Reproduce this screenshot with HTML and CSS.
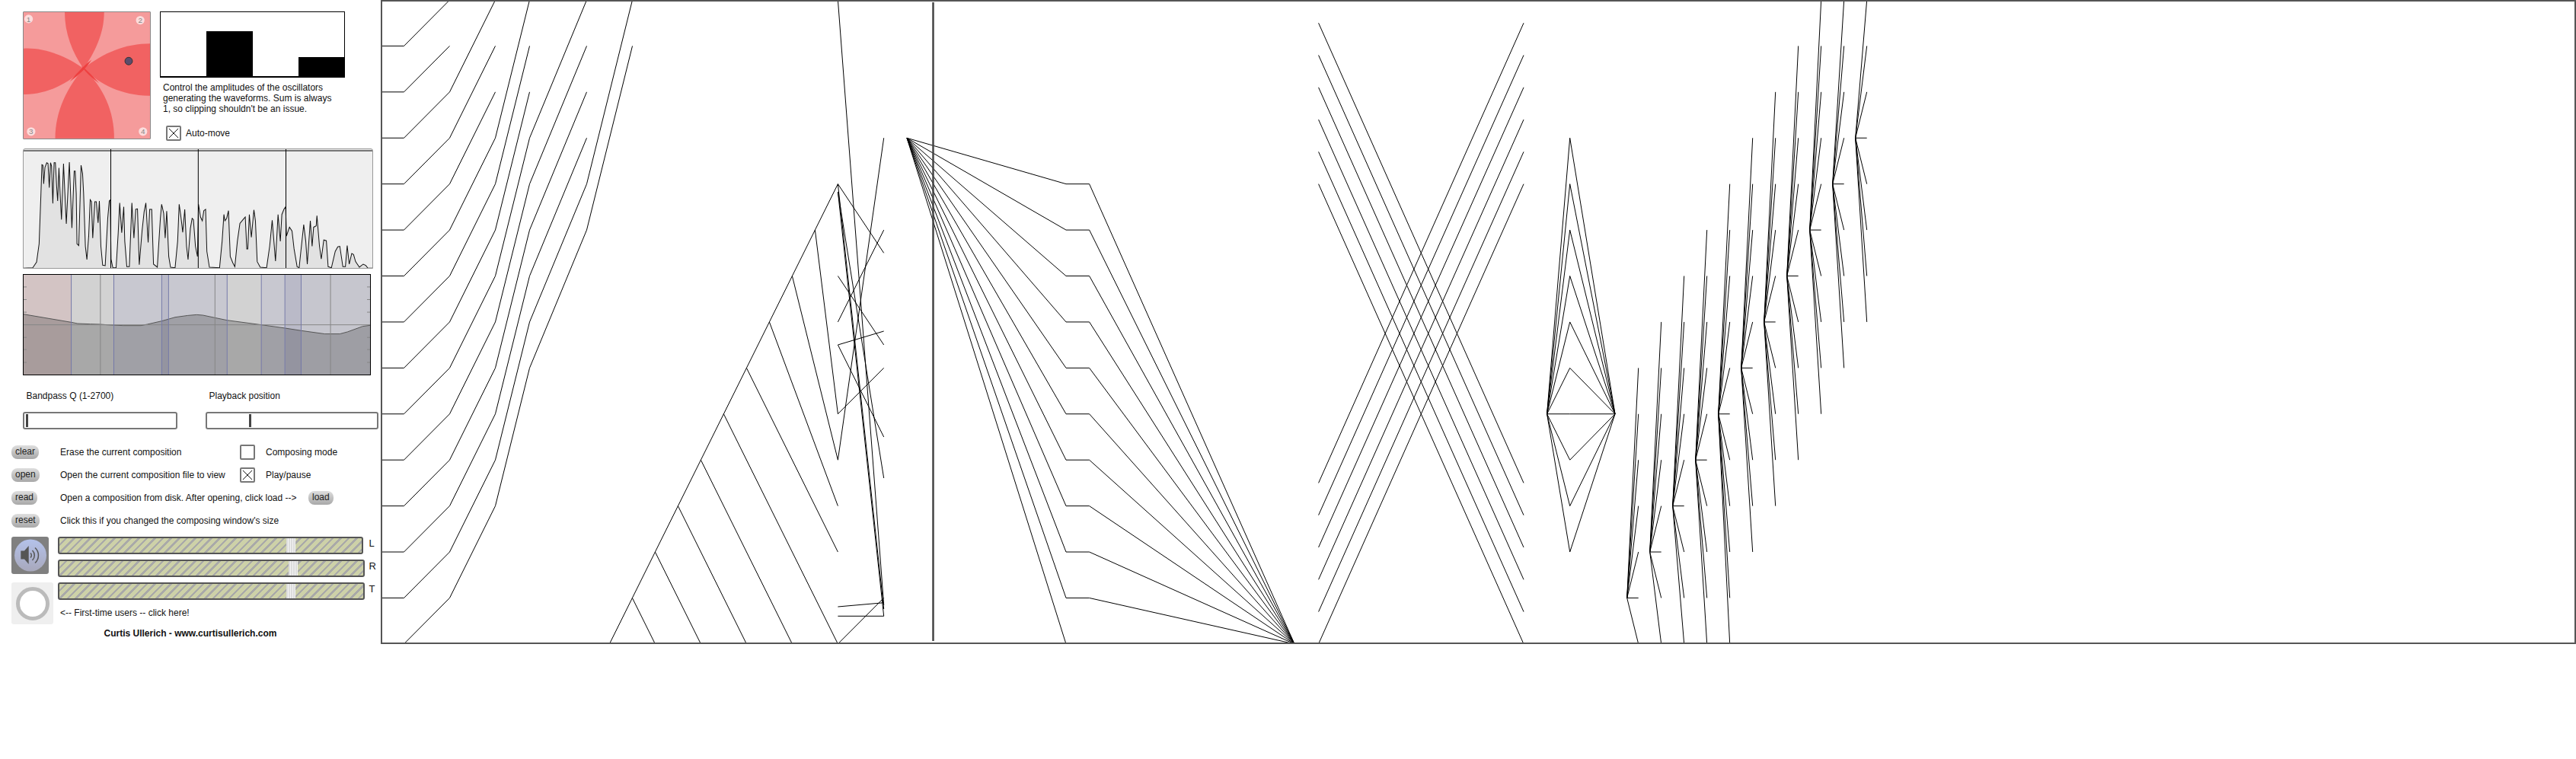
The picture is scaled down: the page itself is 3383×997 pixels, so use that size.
FILE: index.html

```html
<!DOCTYPE html>
<html lang="en">
<head>
    <meta charset="UTF-8">
    <title>Wave Composer</title>
    <link rel="stylesheet" href="styles.css">
</head>
<body>
    <div class="panel">
        <div class="osc">
            <svg class="pad" viewBox="91 45 504 504" preserveAspectRatio="none">
                <rect x="91" y="45" width="504" height="504" fill="#f59b9b"/>
                <g fill="#f16262">
                    <path d="M255,45 C255,130 285,205 330,270 C375,205 412,130 412,45 Z"/>
                    <path d="M91,190 C170,185 260,220 330,270 C270,330 180,375 91,373 Z"/>
                    <path d="M595,170 C500,170 410,205 330,270 C395,335 490,380 595,378 Z"/>
                    <path d="M217,548 C217,440 265,345 330,270 C410,345 452,440 452,548 Z"/>
                </g>
                <g fill="#ee4040">
                    <path d="M275,322 Q325,262 362,235 Q335,280 275,322 Z"/>
                    <path d="M320,258 Q345,275 392,328 Q345,295 320,258 Z"/>
                </g>
                <g fill="#fff" fill-opacity="0.65">
                    <circle cx="111" cy="72" r="17"/>
                    <circle cx="556" cy="77" r="17"/>
                    <circle cx="121" cy="521" r="17"/>
                    <circle cx="567" cy="521" r="17"/>
                </g>
                <g class="pad-num" text-anchor="middle">
                    <text x="111" y="83">1</text>
                    <text x="556" y="88">2</text>
                    <text x="121" y="532">3</text>
                    <text x="567" y="532">4</text>
                </g>
                <circle cx="510" cy="240" r="15" fill="#5c4c6c" stroke="#333" stroke-width="3"/>
            </svg>
            <div class="osc-side">
                <div class="bars">
                    <div class="bar"></div>
                    <div class="bar" style="height: 59px"></div>
                    <div class="bar"></div>
                    <div class="bar" style="height: 25px"></div>
                </div>
                <p class="osc-text">Control the amplitudes of the oscillators generating the waveforms. Sum is always 1, so clipping shouldn't be an issue.</p>
                <div class="auto-move">
                    <span class="check"><svg viewBox="0 0 16 16"><path d="M1,1 L15,15 M15,1 L1,15"/></svg></span>
                    <span>Auto-move</span>
                </div>
            </div>
        </div>

        <svg class="scope" viewBox="94 19 1372 466" preserveAspectRatio="none">
            <polyline fill="#e2e2e2" stroke="#111" stroke-width="3" points="90,486 130,484 145,462 155,390 162,200 166,80 170,82 173,155 178,90 185,72 190,75 195,170 200,72 204,85 209,232 214,72 219,72 224,165 228,222 233,92 238,200 243,295 251,76 262,312 274,70 284,328 293,105 297,105 301,192 304,390 311,397 320,82 326,115 330,190 337,400 343,452 350,360 356,217 361,225 366,368 374,225 380,225 387,308 392,222 398,400 405,474 415,476 425,290 431,222 435,218 438,450 445,484 458,484 466,350 472,230 480,347 488,245 492,380 500,480 510,480 520,230 528,368 535,255 542,253 549,472 560,340 568,265 575,230 584,385 590,255 598,255 605,470 620,482 632,290 637,235 645,270 651,368 657,262 665,440 672,482 690,484 700,380 706,235 713,285 720,345 728,255 735,400 741,452 750,330 757,290 762,295 770,400 778,440 782,235 790,285 797,300 803,260 810,255 815,420 825,482 865,484 875,380 882,275 886,300 893,290 900,260 907,440 917,465 925,480 935,380 945,310 960,292 966,285 972,410 976,410 982,275 990,365 1000,257 1006,300 1013,460 1025,482 1050,484 1062,400 1072,298 1085,458 1095,275 1104,380 1110,275 1118,255 1125,245 1128,360 1140,325 1150,340 1158,410 1170,480 1178,484 1190,370 1196,315 1204,380 1210,470 1222,300 1229,400 1235,325 1245,320 1248,280 1258,400 1265,450 1275,375 1285,378 1292,480 1305,484 1320,420 1330,402 1338,400 1350,480 1360,480 1367,397 1375,470 1385,428 1392,432 1400,460 1415,482 1430,470 1440,475 1448,485 1469,486"/>
            <path d="M94,25 H1466 M437,19 V485 M781,19 V485 M1126,19 V485" fill="none" stroke="#000" stroke-width="3"/>
        </svg>

        <svg class="spectrum" viewBox="92 512 1367 395" preserveAspectRatio="none">
            <g>
                <rect x="92" y="512" width="188" height="395" fill="#d3c4c4"/>
                <rect x="280" y="512" width="168" height="395" fill="#d2d2d2"/>
                <rect x="448" y="512" width="189" height="395" fill="#c8c8d0"/>
                <rect x="637" y="512" width="27" height="395" fill="#babac8"/>
                <rect x="664" y="512" width="231" height="395" fill="#c8c8d0"/>
                <rect x="895" y="512" width="135" height="395" fill="#d2d2d2"/>
                <rect x="1030" y="512" width="93" height="395" fill="#c8c8d0"/>
                <rect x="1123" y="512" width="64" height="395" fill="#babac8"/>
                <rect x="1187" y="512" width="272" height="395" fill="#c6c6ce"/>
            </g>
            <polygon fill="#000" fill-opacity="0.2" points="92,668 280,700 305,705 355,707 395,708 420,710 485,713 555,713 580,708 637,695 690,680 740,673 775,670 800,672 847,682 895,692 1030,710 1123,723 1187,733 1280,746 1340,746 1370,738 1430,716 1459,712 1459,907 92,907"/>
            <polyline fill="none" stroke="#555" stroke-width="3" points="92,668 280,700 305,705 355,707 395,708 420,710 485,713 555,713 580,708 637,695 690,680 740,673 775,670 800,672 847,682 895,692 1030,710 1123,723 1187,733 1280,746 1340,746 1370,738 1430,716 1459,712"/>
            <path d="M92,710 H1459 M395,512 V907 M847,512 V907 M1303,512 V907" fill="none" stroke="#868686" stroke-width="3"/>
            <path d="M280,512 V907 M448,512 V907 M637,512 V907 M664,512 V907 M895,512 V907 M1030,512 V907 M1123,512 V907 M1187,512 V907" fill="none" stroke="#7478a8" stroke-width="3"/>
            <path d="M92,560 H104 M92,610 H104 M92,660 H104 M92,760 H104 M92,808 H104 M92,859 H104 M1447,560 H1459 M1447,610 H1459 M1447,660 H1459 M1447,760 H1459 M1447,808 H1459 M1447,859 H1459" fill="none" stroke="#888" stroke-width="3"/>
        </svg>

        <div class="params">
            <div class="param param-q">
                <div class="param-label">Bandpass Q (1-2700)</div>
                <div class="param-slider"><div class="param-handle q-handle"></div></div>
            </div>
            <div class="param param-pos">
                <div class="param-label">Playback position</div>
                <div class="param-slider"><div class="param-handle pos-handle"></div></div>
            </div>
        </div>

        <div class="commands">
            <div class="cmd-row">
                <div class="cmd-btn"><button>clear</button></div>
                <div class="cmd-desc">Erase the current composition</div>
                <span class="check"></span>
                <span class="check-label">Composing mode</span>
            </div>
            <div class="cmd-row">
                <div class="cmd-btn"><button>open</button></div>
                <div class="cmd-desc">Open the current composition file to view</div>
                <span class="check"><svg viewBox="0 0 16 16"><path d="M1,1 L15,15 M15,1 L1,15"/></svg></span>
                <span class="check-label">Play/pause</span>
            </div>
            <div class="cmd-row">
                <div class="cmd-btn"><button>read</button></div>
                <div class="cmd-desc cmd-desc-wide">Open a composition from disk. After opening, click load --&gt;</div>
                <button>load</button>
            </div>
            <div class="cmd-row">
                <div class="cmd-btn"><button>reset</button></div>
                <div class="cmd-desc cmd-desc-wide">Click this if you changed the composing window's size</div>
            </div>
        </div>

        <div class="volume">
            <div class="volume-icons">
                <div class="speaker">
                    <svg viewBox="0 0 49 49">
                        <defs>
                            <linearGradient id="speaker-fill" x1="0" y1="0" x2="0" y2="1">
                                <stop offset="0" stop-color="#b4c2ea"/>
                                <stop offset="1" stop-color="#a8a8bc"/>
                            </linearGradient>
                        </defs>
                        <circle cx="25" cy="24.5" r="21" fill="url(#speaker-fill)"/>
                        <path d="M12.3,18.5 H17 L22.7,12 V36 L17,29.5 H12.3 Z" fill="#555"/>
                        <path d="M25,21.5 A4,4 0 0 1 25,27.5 M27.5,18 A9,9 0 0 1 27.5,31 M31,14.5 A13.5,13.5 0 0 1 31,34.5" fill="none" stroke="#555" stroke-width="1.5"/>
                    </svg>
                </div>
                <div class="ring-btn"><div class="ring"></div></div>
            </div>
            <div class="volume-main">
                <div class="vol-row">
                    <div class="vol-track vol-track-short"><div class="vol-thumb" style="left: 75.2%"></div></div>
                    <span class="vol-label">L</span>
                </div>
                <div class="vol-row">
                    <div class="vol-track"><div class="vol-thumb" style="left: 75.4%"></div></div>
                    <span class="vol-label">R</span>
                </div>
                <div class="vol-row">
                    <div class="vol-track"><div class="vol-thumb" style="left: 74.8%"></div></div>
                    <span class="vol-label">T</span>
                </div>
                <div class="first-time">&lt;-- First-time users -- click here!</div>
            </div>
        </div>

        <div class="credit">Curtis Ullerich - www.curtisullerich.com</div>
    </div>

    <svg id="comp" class="comp" viewBox="502 2 2879 842" preserveAspectRatio="none"></svg>

    <script src="compose.js"></script>
</body>
</html>
```

FILE: styles.css

```css
* {
    box-sizing: border-box;
}

body {
    margin: 0;
    display: flex;
    align-items: flex-start;
    font-family: "Liberation Sans", Arial, sans-serif;
    font-size: 12px;
    line-height: 14px;
    color: #111;
    background: #fff;
}

.panel {
    width: 500px;
    flex: none;
    display: flex;
    flex-direction: column;
}

.osc {
    display: flex;
    gap: 12px;
    height: 170px;
    margin: 15px 0 0 30px;
}

.pad {
    width: 168px;
    height: 168px;
    border: 1px solid #888;
    border-radius: 1px;
}

.pad-num {
    font-size: 30px;
    fill: #888;
}

.osc-side {
    width: 243px;
}

.bars {
    display: flex;
    align-items: flex-end;
    height: 87px;
    border: 1px solid #000;
    border-bottom-width: 2px;
}

.bar {
    flex: 1;
    background: #000;
}

.osc-text {
    margin: 6px 0 0 4px;
    width: 228px;
}

.auto-move {
    display: flex;
    align-items: center;
    gap: 6px;
    margin: 15px 0 0 8px;
}

.check {
    display: block;
    flex: none;
    width: 20px;
    height: 20px;
    padding: 1px;
    border: 2px solid #777;
    border-radius: 2px;
    background: #fff;
}

.check svg {
    display: block;
    width: 14px;
    height: 14px;
}

.check path {
    fill: none;
    stroke: #111;
    stroke-width: 1.1;
}

.scope {
    display: block;
    flex: none;
    width: 460px;
    height: 158px;
    margin: 10px 0 0 30px;
    background: #efefef;
    border: 1px solid #999;
    border-radius: 3px 3px 0 0;
}

.spectrum {
    display: block;
    flex: none;
    width: 457px;
    height: 133px;
    margin: 7px 0 0 30px;
    border: 1px solid #000;
}

.params {
    display: flex;
    gap: 37px;
    margin: 19.5px 0 0 30px;
}

.param-q {
    width: 203px;
}

.param-pos {
    width: 227px;
}

.param-label {
    padding-left: 4.5px;
}

.param-slider {
    position: relative;
    height: 23px;
    margin-top: 14px;
    border: 2px solid #777;
    border-radius: 3px;
}

.param-handle {
    position: absolute;
    top: 1px;
    bottom: 1px;
    width: 3px;
    background: #444;
}

.q-handle {
    left: 2px;
}

.pos-handle {
    left: 55px;
}

.commands {
    margin: 15.5px 0 0 15px;
}

.cmd-row {
    display: flex;
    align-items: center;
    height: 30px;
}

.cmd-btn {
    width: 64px;
    flex: none;
}

button {
    display: block;
    height: 18px;
    padding: 0 5px 2px;
    border: none;
    border-radius: 8px;
    font: inherit;
    color: #222;
    background: linear-gradient(#dedede, #a8a8a8);
}

.cmd-desc {
    width: 236px;
    flex: none;
}

.cmd-desc-wide {
    width: 326px;
}

.check-label {
    margin-left: 14px;
}

.volume {
    display: flex;
    margin: 6px 0 0 15px;
}

.volume-icons {
    width: 60.5px;
    flex: none;
}

.speaker {
    width: 49px;
    height: 49px;
    background: #808080;
    border-radius: 3px;
}

.speaker svg {
    display: block;
}

.ring-btn {
    display: flex;
    align-items: center;
    justify-content: center;
    width: 55px;
    height: 55px;
    margin-top: 11px;
    background: #efefef;
    border-radius: 3px;
}

.ring {
    width: 44px;
    height: 44px;
    background: #fff;
    border: 5px solid #bbb;
    border-radius: 50%;
}

.volume-main {
    display: flex;
    flex-direction: column;
    gap: 7px;
}

.vol-row {
    display: flex;
    align-items: center;
    gap: 5.5px;
    width: 424px;
}

.vol-label {
    margin-bottom: 5px;
    font-size: 13px;
}

.vol-track {
    position: relative;
    width: 403.5px;
    height: 23px;
    border: 2px solid #555;
    border-radius: 3px;
    background: repeating-linear-gradient(135deg, #cdd1a8 0 5px, #a9a9a9 5px 7.5px);
}

.vol-track-short {
    width: 401.5px;
    margin-right: 2px;
}

.vol-thumb {
    position: absolute;
    top: 0;
    bottom: 0;
    width: 12px;
    background: repeating-linear-gradient(90deg, #dcdcdc 0 2px, #f4f4f4 2px 3px);
}

.first-time {
    margin: 3px 0 0 3.5px;
}

.credit {
    margin-top: 5px;
    font-weight: bold;
    text-align: center;
}

.comp {
    display: block;
    flex: none;
    width: 2883px;
    height: 846px;
    border: 2px solid #555;
}

.comp polyline {
    fill: none;
    stroke: #000;
    stroke-width: 1;
    vector-effect: non-scaling-stroke;
}

.comp .playhead {
    stroke: #444;
    stroke-width: 2.5;
}
```

FILE: compose.js

```js
const comp = document.getElementById('comp');
const ROW = 60.42;

function row(r) {
    return r * ROW;
}

function addLine(points) {
    const line = document.createElementNS('http://www.w3.org/2000/svg', 'polyline');
    line.setAttribute('points', points.map(p => p[0] + ',' + p[1]).join(' '));
    comp.appendChild(line);
    return line;
}

// left wave, every row bends up by the same amounts
const waveX = [530.5, 590.5, 650.5, 695.5, 770.5, 830.5];
const waveUp = [0, 1, 3, 6, 9, 13];
for (let k = 1; k <= 14; k++) {
    const points = [[501, row(k)]];
    waveX.forEach((x, i) => {
        if (k - waveUp[i] >= 0) points.push([x, row(k - waveUp[i])]);
    });
    addLine(points);
}

// triangle with the diagonal ribs
const triX = 1100.4;
const triR = 1160.7;
addLine([[triX, row(4)], [triX - 300, row(14)]]);
for (let k = 5; k <= 13; k++) {
    const x = triX - 30 * (k - 4);
    // upper ribs all land on the same column, lower ones run off the bottom
    if (k <= 8) {
        addLine([[x, row(k)], [triX, row(k + 4)]]);
    } else {
        addLine([[x, row(k)], [x + 30 * (14 - k), row(14)]]);
    }
}
[
    [triX, row(4), triR, 332.3],
    [triR, row(5), triX, row(7)],
    [triX, row(6), triR, 453],
    [triX, 453, triR, 435],
    [triX, 453, triR, 574],
    [triR, row(8), triX, row(9)],
    [triR, row(3), triX, row(10)],
    [triX, 0, triR, 795],
    [triX, 252, triR, 628],
    [triX, 252, triR, 809.3],
    [triX, row(4), triR, 800],
    [triX, 809.3, triR, 809.3],
    [triX, 797, triR, 791.7],
    [triX, row(14), triR, row(13)]
].forEach(s => addLine([[s[0], s[1]], [s[2], s[3]]]));

// fan between the two points
const fanTop = [1191, row(3)];
const fanBottom = [1700, row(14)];
for (let k = 4; k <= 13; k++) {
    addLine([fanTop, [1400, row(k)], [1430.6, row(k)], fanBottom]);
}
addLine([fanTop, [1400, row(14)]]);

// crossing lines
const crossL = 1731.6;
const crossR = 2001;
for (let i = 0; i < 6; i++) {
    const top = row(0.5 + 0.7 * i);
    const bottom = row(10.5 + 0.7 * i);
    addLine([[crossL, top], [crossR, bottom]]);
    addLine([[crossL, bottom], [crossR, top]]);
}

// diamond
for (let k = 3; k <= 12; k++) {
    addLine([[2031.6, row(9)], [2061.7, row(k)], [2121, row(9)]]);
}

// small fans going up to the right
for (let j = 0; j <= 10; j++) {
    const x = 2136.7 + 30 * j;
    const r = 13 - j;
    const last = r === 9 ? 5 : 4;
    for (let d = -5; d <= last; d++) {
        if (r + d >= 0 && r + d <= 14) addLine([[x, row(r)], [x + 15, row(r + d)]]);
    }
}

const playhead = addLine([[1225.5, 3], [1225.5, 842]]);
playhead.setAttribute('class', 'playhead');
```
